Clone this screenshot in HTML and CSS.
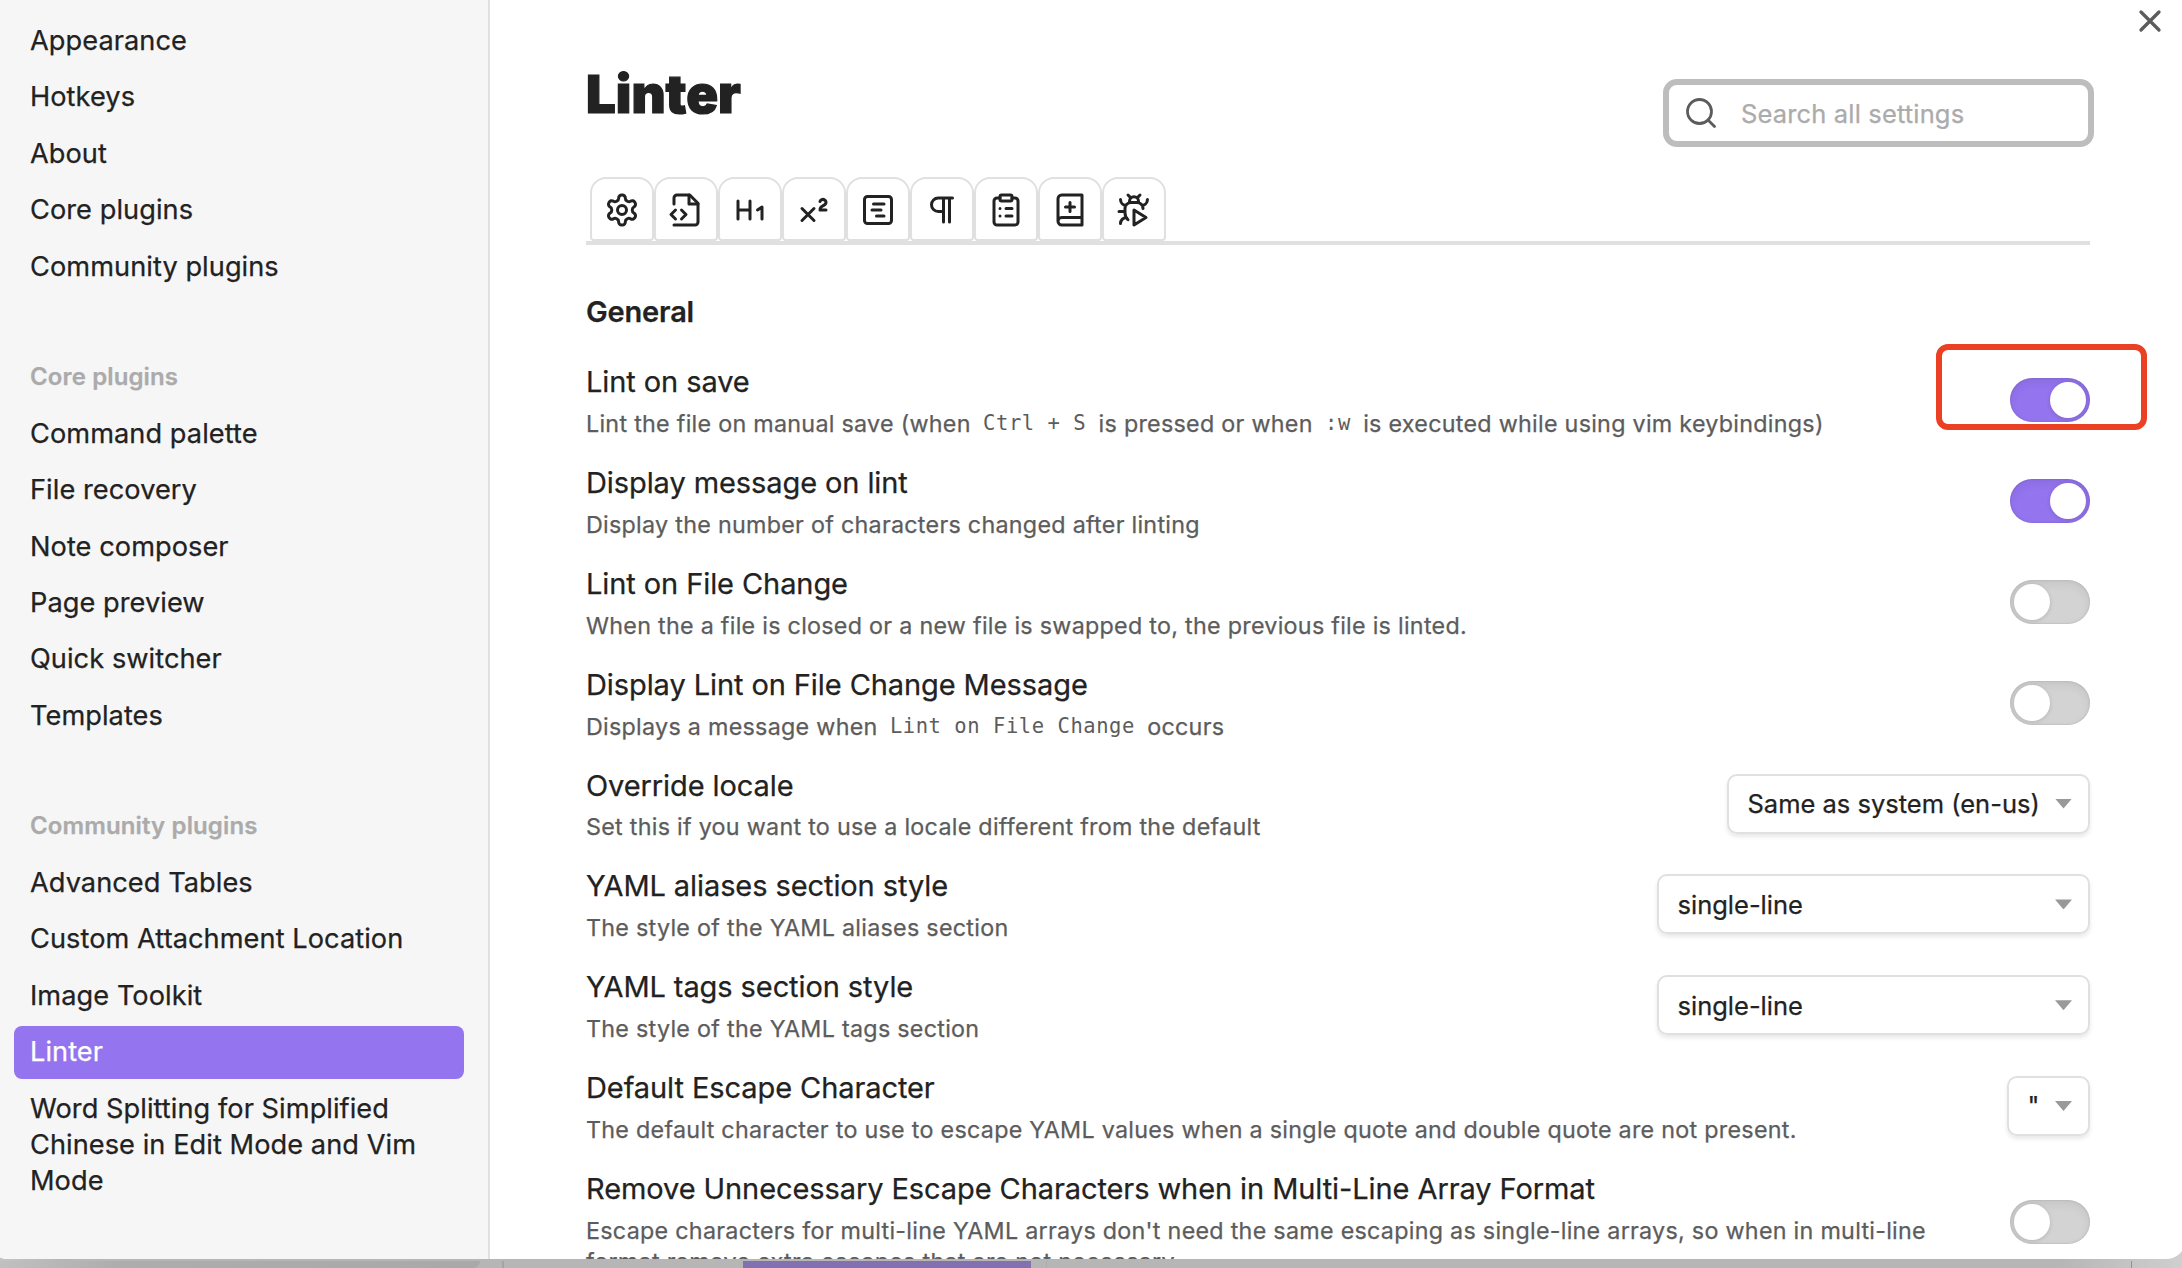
FILE: index.html
```
<!DOCTYPE html>
<html lang="en">
<head>
<meta charset="utf-8">
<title>Settings</title>
<link rel="stylesheet" href="styles.css">
</head>
<body>
<div class="backdrop"><span class="bd-left"></span><span class="bd-line bd-line-a"></span><span class="bd-accent"></span><span class="bd-line bd-line-b"></span><span class="bd-line bd-line-c"></span></div>
<div class="modal">
  <nav class="sidebar">
    <div class="group">
      <div class="item">Appearance</div>
      <div class="item">Hotkeys</div>
      <div class="item">About</div>
      <div class="item">Core plugins</div>
      <div class="item">Community plugins</div>
    </div>
    <div class="group-title">Core plugins</div>
    <div class="group">
      <div class="item">Command palette</div>
      <div class="item">File recovery</div>
      <div class="item">Note composer</div>
      <div class="item">Page preview</div>
      <div class="item">Quick switcher</div>
      <div class="item">Templates</div>
    </div>
    <div class="group-title">Community plugins</div>
    <div class="group">
      <div class="item">Advanced Tables</div>
      <div class="item">Custom Attachment Location</div>
      <div class="item">Image Toolkit</div>
      <div class="item active">Linter</div>
      <div class="item">Word Splitting for Simplified Chinese in Edit Mode and Vim Mode</div>
    </div>
  </nav>
  <main class="content">
    <svg class="icon close" viewBox="0 0 24 24"><path d="M18 6 6 18M6 6l12 12"/></svg>
    <header class="header">
      <h1 class="title">Linter</h1>
      <div class="search">
        <svg class="icon" viewBox="0 0 24 24"><circle cx="11" cy="11" r="8"/><path d="m21 21-4.3-4.3"/></svg>
        <span>Search all settings</span>
      </div>
    </header>
    <div class="tabs">
      <div class="tab"><svg class="icon" viewBox="0 0 24 24"><path d="M12.22 2h-.44a2 2 0 0 0-2 2v.18a2 2 0 0 1-1 1.73l-.43.25a2 2 0 0 1-2 0l-.15-.08a2 2 0 0 0-2.73.73l-.22.38a2 2 0 0 0 .73 2.73l.15.1a2 2 0 0 1 1 1.72v.51a2 2 0 0 1-1 1.74l-.15.09a2 2 0 0 0-.73 2.73l.22.38a2 2 0 0 0 2.73.73l.15-.08a2 2 0 0 1 2 0l.43.25a2 2 0 0 1 1 1.73V20a2 2 0 0 0 2 2h.44a2 2 0 0 0 2-2v-.18a2 2 0 0 1 1-1.73l.43-.25a2 2 0 0 1 2 0l.15.08a2 2 0 0 0 2.73-.73l.22-.39a2 2 0 0 0-.73-2.73l-.15-.08a2 2 0 0 1-1-1.74v-.5a2 2 0 0 1 1-1.74l.15-.09a2 2 0 0 0 .73-2.73l-.22-.38a2 2 0 0 0-2.73-.73l-.15.08a2 2 0 0 1-2 0l-.43-.25a2 2 0 0 1-1-1.73V4a2 2 0 0 0-2-2z"/><circle cx="12" cy="12" r="3"/></svg></div>
      <div class="tab"><svg class="icon" viewBox="0 0 24 24"><path d="M4 22h14a2 2 0 0 0 2-2V7.500L14.500 2H6a2 2 0 0 0-2 2v4"/><path d="M14 2v6h6M5 12l-3 3 3 3M9 18l3-3-3-3"/></svg></div>
      <div class="tab"><svg class="icon" viewBox="0 0 24 24"><path d="M4 12h8M4 18V6M12 18V6M17 12l3-2v8"/></svg></div>
      <div class="tab"><svg class="icon" viewBox="0 0 24 24"><path d="m4 19 8-8M12 19l-8-8"/><path d="M20 12h-4c0-1.500.442-2 1.500-2.500S20 8.334 20 7.002c0-.472-.17-.93-.484-1.290a2.105 2.105 0 0 0-2.617-.436c-.42.239-.738.614-.899 1.060"/></svg></div>
      <div class="tab"><svg class="icon" viewBox="0 0 24 24"><rect x="3" y="3" width="18" height="18" rx="2"/><path d="M9 8h7M8 12h6M11 16h5"/></svg></div>
      <div class="tab"><svg class="icon" viewBox="0 0 24 24"><path d="M13 4v16M17 4v16M19 4H9.500a4.500 4.500 0 0 0 0 9H13"/></svg></div>
      <div class="tab"><svg class="icon" viewBox="0 0 24 24"><rect x="8" y="2" width="8" height="4" rx="1"/><path d="M16 4h2a2 2 0 0 1 2 2v14a2 2 0 0 1-2 2H6a2 2 0 0 1-2-2V6a2 2 0 0 1 2-2h2M12 11h4M12 16h4M8 11h.01M8 16h.01"/></svg></div>
      <div class="tab"><svg class="icon" viewBox="0 0 24 24"><path d="M4 19.500v-15A2.500 2.500 0 0 1 6.500 2H20v20H6.500a2.500 2.500 0 0 1 0-5H20M9 10h6M12 7v6"/></svg></div>
      <div class="tab"><svg class="icon" viewBox="0 0 24 24"><path d="m12 12 8 5-8 5ZM8 2l1.880 1.880M14.120 3.880 16 2M9 7.130v-1a3 3 0 1 1 6 0v1M18 11a4 4 0 0 0-4-4h-4a4 4 0 0 0-4 4v3a6.100 6.100 0 0 0 2 4.500M20.970 5c0 2.100-1.600 3.800-3.500 4M3 21c0-2.100 1.700-3.900 3.800-4M6 13H2M6.530 9C4.600 8.800 3 7.100 3 5"/></svg></div>
    </div>
    <h2 class="section">General</h2>
    <div class="row">
      <div class="info"><div class="name">Lint on save</div><div class="desc">Lint the file on manual save (when <code>Ctrl + S</code> is pressed or when <code>:w</code> is executed while using vim keybindings)</div></div>
      <div class="toggle on"></div>
      <div class="highlight"></div>
    </div>
    <div class="row">
      <div class="info"><div class="name">Display message on lint</div><div class="desc">Display the number of characters changed after linting</div></div>
      <div class="toggle on"></div>
    </div>
    <div class="row">
      <div class="info"><div class="name">Lint on File Change</div><div class="desc">When the a file is closed or a new file is swapped to, the previous file is linted.</div></div>
      <div class="toggle"></div>
    </div>
    <div class="row">
      <div class="info"><div class="name">Display Lint on File Change Message</div><div class="desc">Displays a message when <code>Lint on File Change</code> occurs</div></div>
      <div class="toggle"></div>
    </div>
    <div class="row">
      <div class="info"><div class="name">Override locale</div><div class="desc">Set this if you want to use a locale different from the default</div></div>
      <div class="select locale"><span>Same as system (en-us)</span></div>
    </div>
    <div class="row">
      <div class="info"><div class="name">YAML aliases section style</div><div class="desc">The style of the YAML aliases section</div></div>
      <div class="select wide"><span>single-line</span></div>
    </div>
    <div class="row">
      <div class="info"><div class="name">YAML tags section style</div><div class="desc">The style of the YAML tags section</div></div>
      <div class="select wide"><span>single-line</span></div>
    </div>
    <div class="row">
      <div class="info"><div class="name">Default Escape Character</div><div class="desc">The default character to use to escape YAML values when a single quote and double quote are not present.</div></div>
      <div class="select tiny"><span>"</span></div>
    </div>
    <div class="row">
      <div class="info"><div class="name">Remove Unnecessary Escape Characters when in Multi-Line Array Format</div><div class="desc">Escape characters for multi-line YAML arrays don't need the same escaping as single-line arrays, so when in multi-line format remove extra escapes that are not necessary.</div></div>
      <div class="toggle"></div>
    </div>
  </main>
</div>
</body>
</html>
```
FILE: styles.css
```
* { box-sizing: border-box; }

body {
  margin: 0;
  width: 2182px;
  height: 1268px;
  overflow: hidden;
  position: relative;
  font-family: Inter, "Liberation Sans", sans-serif;
  -webkit-text-stroke-width: 0.25px;
  color: #222;
  background: #b7b7b7;
}

/* Dimmed application window showing below the dialog */
.backdrop {
  position: absolute;
  left: 0;
  right: 0;
  bottom: 0;
  height: 30px;
  background: linear-gradient(90deg, #c4c4c4 0, #b6b6b6 60px, #b6b6b6 2060px, #cfcfcf 100%);
}
.backdrop span { position: absolute; bottom: 0; height: 7px; }
.bd-left {
  left: 0;
  width: 480px;
  border-bottom-right-radius: 8px;
  background: linear-gradient(90deg, #c0c0c0 0, #adadad 120px, #a9a9a9 100%);
}
.bd-line { width: 2px; background: #a4a4a4; }
.bd-line-a { left: 502px; }
.bd-accent { left: 743px; width: 288px; background: #8270b0; }
.backdrop .bd-line-b { left: 1046px; width: 1px; background: #adadad; }
.bd-line-c { left: 2131px; width: 1px; background: #929292; }

.modal {
  position: relative;
  display: flex;
  width: 2198px;
  height: 1259px;
  margin-left: -12px;
  overflow: hidden;
  border-radius: 0 0 20px 20px;
  background: #fff;
}

.sidebar {
  flex: none;
  width: 502px;
  padding: 15px 24px 0 26px;
  border-right: 2px solid #e0e0e0;
  background: #f6f6f6;
}
.group { display: flex; flex-direction: column; gap: 4px; }
.item {
  padding: 8px 16px;
  border-radius: 8px;
  font-size: 27.2px;
  line-height: 36.4px;
  letter-spacing: 0.002em;
}
.item.active { background: #9474ef; color: #fff; }
.group-title {
  padding: 67.5px 16px 16px;
  font-size: 24px;
  font-weight: 600;
  line-height: 31.2px;
  letter-spacing: 0.005em;
  color: #ababab;
}

.content { flex: 1; position: relative; padding: 67.5px 96px 0; }

.icon {
  width: 36px;
  height: 36px;
  flex: none;
  fill: none;
  stroke: #222;
  stroke-width: 2;
  stroke-linecap: round;
  stroke-linejoin: round;
}
.close { position: absolute; left: 1642px; top: 3px; stroke: #5c5c5c; stroke-width: 2.2; }

.header { display: flex; justify-content: space-between; height: 109.5px; }
.title {
  margin: 0;
  font-size: 52.7px;
  font-weight: 900;
  line-height: 52px;
  -webkit-text-stroke-width: 1.2px;
}
.search {
  display: flex;
  align-items: center;
  gap: 22px;
  width: 431px;
  height: 68px;
  margin: 11.5px -4px 0 0;
  padding-left: 14px;
  border: 6px solid #bdbdbd;
  border-radius: 14px;
  font-size: 25.5px;
  letter-spacing: 0.006em;
  color: #ababab;
}
.search .icon { stroke: #5c5c5c; stroke-width: 1.85; }

.tabs { display: flex; padding-left: 4px; height: 68px; border-bottom: 4px solid #e0e0e0; }
.tab {
  display: flex;
  align-items: center;
  justify-content: center;
  width: 64px;
  height: 64px;
  padding-top: 2px;
  border: 2px solid #e0e0e0;
  border-radius: 16px 16px 4px 4px;
}

.section {
  margin: 47.5px 0 19.5px;
  font-size: 29px;
  font-weight: 600;
  line-height: 38px;
  letter-spacing: -0.006em;
}

.row { position: relative; display: flex; align-items: center; gap: 32px; min-height: 100.8px; }
.info { flex: 1; padding: 12.4px 0 11.3px; }
.name { font-size: 29px; line-height: 39px; letter-spacing: -0.003em; }
.desc {
  margin-top: 6.9px;
  font-size: 23.3px;
  line-height: 31.2px;
  letter-spacing: 0.0118em;
  color: #5c5c5c;
}
code {
  padding: 0 5.5px;
  font-family: "DejaVu Sans Mono", monospace;
  -webkit-text-stroke-width: 0;
  font-size: 20.5px;
  line-height: 1;
  letter-spacing: 0.55px;
  vertical-align: 2px;
}

.toggle {
  flex: none;
  width: 80px;
  height: 44px;
  padding: 4px;
  border-radius: 22px;
  background: #d3d3d3;
  box-shadow: inset 0 4px 10px rgba(0, 0, 0, 0.07), inset 0 0 2px rgba(0, 0, 0, 0.2);
}
.toggle::after {
  content: "";
  display: block;
  width: 36px;
  height: 36px;
  border-radius: 50%;
  background: #fff;
  box-shadow: 0 1px 4px rgba(0, 0, 0, 0.15);
}
.toggle.on { background: #9474ef; padding-left: 40px; }

.select {
  flex: none;
  display: flex;
  align-items: center;
  justify-content: space-between;
  height: 60px;
  padding: 0 16px 0 18.5px;
  border: 2px solid #e0e0e0;
  border-radius: 10px;
  font-size: 25.5px;
  box-shadow: 0 3px 4px rgba(0, 0, 0, 0.09);
}
.select::after {
  content: "";
  width: 17px;
  height: 10px;
  background: #999;
  clip-path: polygon(0 0, 100% 0, 50% 100%);
}
.locale { width: 363px; }
.wide { width: 433px; }
.tiny { width: 83px; }

/* Annotation frame around the first toggle */
.highlight {
  position: absolute;
  left: 1350px;
  top: -6.5px;
  width: 211px;
  height: 86.5px;
  border: 6px solid #ec4025;
  border-radius: 12px;
}
```
